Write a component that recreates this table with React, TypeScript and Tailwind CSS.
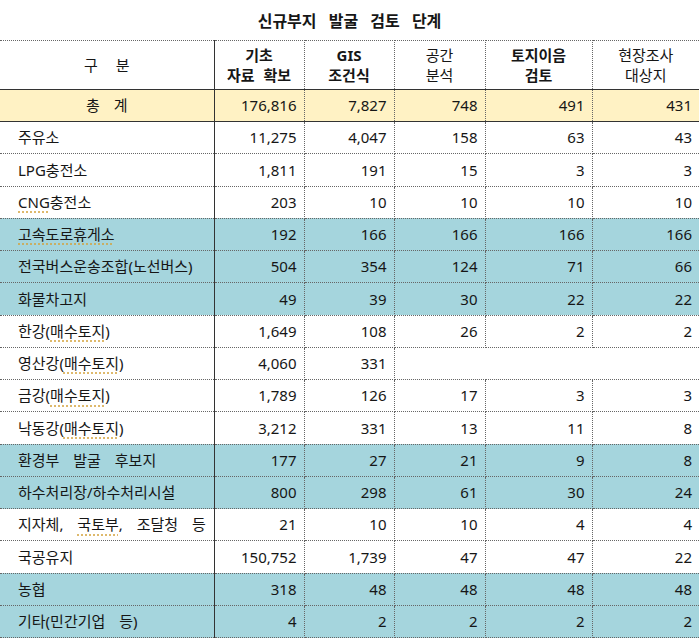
import React from 'react';

type Row = {
  label: React.ReactNode;
  values: string[];
  tone: 'yellow' | 'teal' | 'white';
  center?: boolean;
};

const sq = 'underline decoration-dotted decoration-[#d4a33c] underline-offset-4';

const rows: Row[] = [
  { label: '총 계', values: ['176,816', '7,827', '748', '491', '431'], tone: 'yellow', center: true },
  { label: '주유소', values: ['11,275', '4,047', '158', '63', '43'], tone: 'white' },
  { label: 'LPG충전소', values: ['1,811', '191', '15', '3', '3'], tone: 'white' },
  { label: <><span className={sq}>CNG</span>충전소</>, values: ['203', '10', '10', '10', '10'], tone: 'white' },
  { label: <span className={sq}>고속도로휴게소</span>, values: ['192', '166', '166', '166', '166'], tone: 'teal' },
  { label: '전국버스운송조합(노선버스)', values: ['504', '354', '124', '71', '66'], tone: 'teal' },
  { label: '화물차고지', values: ['49', '39', '30', '22', '22'], tone: 'teal' },
  { label: <>한강(<span className={sq}>매수토지</span>)</>, values: ['1,649', '108', '26', '2', '2'], tone: 'white' },
  { label: <>영산강(<span className={sq}>매수토지</span>)</>, values: ['4,060', '331'], tone: 'white' },
  { label: <>금강(<span className={sq}>매수토지</span>)</>, values: ['1,789', '126', '17', '3', '3'], tone: 'white' },
  { label: <>낙동강(<span className={sq}>매수토지</span>)</>, values: ['3,212', '331', '13', '11', '8'], tone: 'white' },
  { label: '환경부 발굴 후보지', values: ['177', '27', '21', '9', '8'], tone: 'teal' },
  { label: '하수처리장/하수처리시설', values: ['800', '298', '61', '30', '24'], tone: 'teal' },
  { label: <>지자체, <span className={sq}>국토부</span>, 조달청 등</>, values: ['21', '10', '10', '4', '4'], tone: 'white' },
  { label: '국공유지', values: ['150,752', '1,739', '47', '47', '22'], tone: 'white' },
  { label: '농협', values: ['318', '48', '48', '48', '48'], tone: 'teal' },
  { label: '기타(민간기업 등)', values: ['4', '2', '2', '2', '2'], tone: 'teal' },
];

const toneBg = {
  yellow: 'bg-[#fff2c4]',
  teal: 'bg-[#a5d5dd]',
  white: 'bg-white',
};

const headCell = 'border-t border-dotted border-[#666] [word-spacing:5px]';

const App = () => {
  return (
    <div
      className="w-[699px] h-[644px] bg-white text-[#161616] overflow-hidden"
      style={{ fontFamily: '"Noto Sans", "Noto Sans CJK KR", sans-serif' }}
    >
      <div className="h-[40px] pt-[2px] flex items-center justify-center text-[16px] font-bold [word-spacing:8px]">
        신규부지 발굴 검토 단계
      </div>

      <table className="table-fixed border-collapse w-[699px] text-[15px]">
        <colgroup>
          <col className="w-[214px]" />
          <col className="w-[90px]" />
          <col className="w-[90px]" />
          <col className="w-[91px]" />
          <col className="w-[107px]" />
          <col className="w-[107px]" />
        </colgroup>
        <thead>
          <tr className="h-[49px] leading-[20px]">
            <th className="font-normal border-t border-dotted border-[#666] [word-spacing:14px]" style={{ borderBottom: '1px solid #333', borderRight: '1px solid #333' }}>
              구 분
            </th>
            <th className={`font-bold border-r ${headCell}`} style={{ borderBottom: '1px solid #333' }}>
              기초<br />자료 확보
            </th>
            <th className={`font-bold border-r ${headCell}`} style={{ borderBottom: '1px solid #333' }}>
              GIS<br />조건식
            </th>
            <th className={`font-normal border-r ${headCell}`} style={{ borderBottom: '1px solid #333' }}>
              공간<br />분석
            </th>
            <th className={`font-bold border-r ${headCell}`} style={{ borderBottom: '1px solid #333' }}>
              토지이음<br />검토
            </th>
            <th className={`font-normal ${headCell}`} style={{ borderBottom: '1px solid #333' }}>
              현장조사<br />대상지
            </th>
          </tr>
        </thead>
        <tbody>
          {rows.map((row, i) => {
            const first = i === 0;
            const bottom = first
              ? { borderBottom: '1px solid #333' }
              : { borderBottom: '1px dotted #666' };
            return (
              <tr key={i} className={`${first ? 'h-[32px]' : 'h-[32.25px]'} ${toneBg[row.tone]}`}>
                <td
                  className={`whitespace-nowrap [word-spacing:10px] ${row.center ? 'text-center' : 'text-left pl-[18px]'}`}
                  style={{ ...bottom, borderRight: '1px solid #333' }}
                >
                  {row.label}
                </td>
                {row.values.map((v, j) => (
                  <td
                    key={j}
                    className="text-right pr-[7px]"
                    style={{ ...bottom, borderRight: j < 4 ? '1px dotted #666' : undefined }}
                  >
                    {v}
                  </td>
                ))}
                {row.values.length < 5 && (
                  <td colSpan={5 - row.values.length} style={bottom}></td>
                )}
              </tr>
            );
          })}
        </tbody>
      </table>
    </div>
  );
};

export default App;
